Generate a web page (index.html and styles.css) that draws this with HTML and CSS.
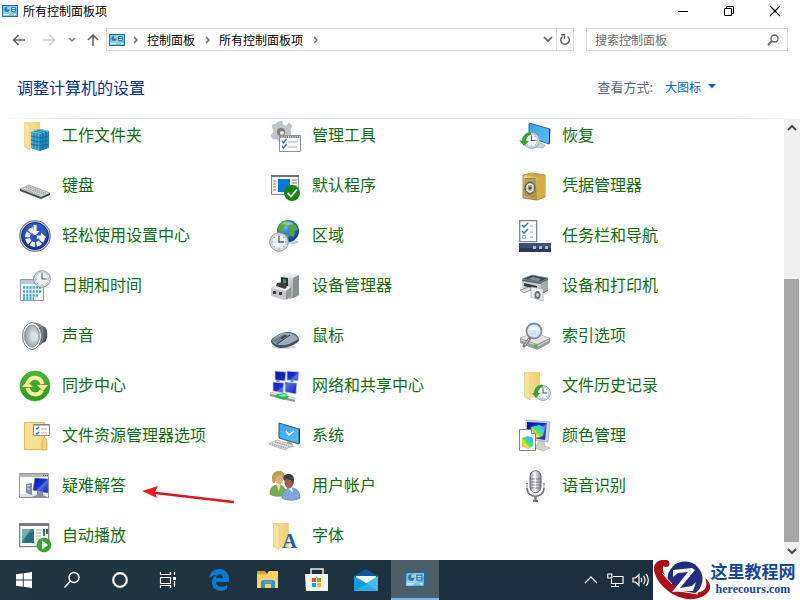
FILE: index.html
```html
<!DOCTYPE html>
<html lang="zh-CN">
<head>
<meta charset="utf-8">
<meta name="viewport" content="width=device-width, initial-scale=1">
<title>所有控制面板项</title>
<link rel="stylesheet" href="styles.css">
</head>
<body>
<svg class="defs" aria-hidden="true">
  <defs>
    <linearGradient id="folder" x1="0" y1="0" x2="1" y2="0"><stop offset="0" stop-color="#fbe6a0"/><stop offset="1" stop-color="#f0cd70"/></linearGradient>
    <linearGradient id="steel" x1="0" y1="0" x2="1" y2="1"><stop offset="0" stop-color="#f4f5f6"/><stop offset="1" stop-color="#8d9196"/></linearGradient>
    <linearGradient id="dark" x1="0" y1="0" x2="1" y2="1"><stop offset="0" stop-color="#8f979d"/><stop offset="1" stop-color="#343a40"/></linearGradient>
    <linearGradient id="screen" x1="0" y1="0" x2="1" y2="1"><stop offset="0" stop-color="#0611a8"/><stop offset=".5" stop-color="#1c33d0"/><stop offset=".55" stop-color="#4e72ea"/><stop offset="1" stop-color="#0a1b9c"/></linearGradient>
    <linearGradient id="sky" x1="0" y1="0" x2="1" y2="1"><stop offset="0" stop-color="#37a1ec"/><stop offset="1" stop-color="#5cc0fb"/></linearGradient>
    <linearGradient id="gold" x1="0" y1="0" x2="1" y2="1"><stop offset="0" stop-color="#eddb8c"/><stop offset="1" stop-color="#a9852f"/></linearGradient>
    <linearGradient id="green" x1="0" y1="0" x2="0" y2="1"><stop offset="0" stop-color="#4db53c"/><stop offset="1" stop-color="#2b9b22"/></linearGradient>
    <linearGradient id="rainbow" x1="0" y1="1" x2="1" y2="0"><stop offset="0" stop-color="#ff4b3c"/><stop offset=".3" stop-color="#ffe629"/><stop offset=".5" stop-color="#4ee457"/><stop offset=".7" stop-color="#22d5ef"/><stop offset="1" stop-color="#e63be0"/></linearGradient>
    <radialGradient id="ball" cx=".4" cy=".3" r=".8"><stop offset="0" stop-color="#6fb6f5"/><stop offset=".5" stop-color="#2567c6"/><stop offset="1" stop-color="#0b2c7e"/></radialGradient>
    <radialGradient id="ease" cx=".5" cy=".3" r=".7"><stop offset="0" stop-color="#4a72d8"/><stop offset="1" stop-color="#162f93"/></radialGradient>
    <radialGradient id="cone" cx=".6" cy=".5" r=".6"><stop offset="0" stop-color="#f4f6f7"/><stop offset="1" stop-color="#8b989f"/></radialGradient>
    <linearGradient id="mic" x1="0" y1="0" x2="1" y2="0"><stop offset="0" stop-color="#8b8f9b"/><stop offset=".4" stop-color="#fafafc"/><stop offset="1" stop-color="#83889a"/></linearGradient>
    <symbol id="panel" viewBox="0 0 16 12">
      <rect x=".5" y=".5" width="15" height="11" fill="#6cc5f2" stroke="#1a6da8"/>
      <path d="M1 8 8 1h7v2L6 11H1z" fill="#8ed6fa"/>
      <circle cx="5" cy="4.500" r="2.500" fill="#2c76b8"/><path d="M5 4.500V2a2.500 2.500 0 0 1 2.500 2.500z" fill="#f5c83b"/>
      <path d="M9.500 2.500h4v4h-4zM10 4.500h3" fill="#c7ecff" stroke="#2879b5"/>
      <path d="M2 9.500h5" stroke="#e8f8ff"/><path d="M9 9.500h2" stroke="#f3c94d"/><path d="M12 9.500h2" stroke="#fff"/>
    </symbol>
    <symbol id="clock" viewBox="0 0 20 20">
      <circle cx="10" cy="10" r="9.300" fill="#d8dde1" stroke="#8e989f"/>
      <circle cx="10" cy="10" r="7.300" fill="#f2f6f8" stroke="#b5bdc3" stroke-width=".7"/>
      <path d="M10 4v6h5" fill="none" stroke="#4b5b68" stroke-width="1.300"/>
      <path d="M10 3v1.500M10 15.500V17M3 10h1.500M15.500 10H17M5 5l1 1M15 5l-1 1M5 15l1-1M15 15l-1-1" stroke="#7e8990" stroke-width=".8"/>
    </symbol>
    <symbol id="folder-shape" viewBox="0 0 18 28">
      <path d="M0 0h16v26L0 25z" fill="url(#folder)"/><path d="M0 0 6 3v25l-6-4z" fill="#f9e2a0" stroke="#e6c36c" stroke-width=".6"/>
    </symbol>
  </defs>
</svg>

<header class="titlebar">
  <svg class="panel-icon" aria-hidden="true"><use href="#panel"/></svg>
  <span class="title">所有控制面板项</span>
  <div class="window-buttons">
    <button aria-label="最小化"><svg width="12" height="12"><path d="M1 6.500h10" stroke="#000"/></svg></button>
    <button aria-label="还原"><svg width="12" height="12" fill="none" stroke="#000"><path d="M1.500 3.500h7v7h-7zM3.500 3V1.500h7v7H9"/></svg></button>
    <button aria-label="关闭"><svg width="12" height="12"><path d="m1 1 10 10M11 1 1 11" stroke="#000" stroke-width="1.100"/></svg></button>
  </div>
</header>

<nav class="navbar" aria-label="导航">
  <div class="history">
    <button class="wide" aria-label="后退"><svg width="14" height="12" fill="none" stroke="#666" stroke-width="1.600"><path d="M13 6H2M6.500 1 1.500 6l5 5"/></svg></button>
    <button class="wide" aria-label="前进"><svg width="14" height="12" fill="none" stroke="#d0d0d0" stroke-width="1.500"><path d="M1 6h11M7.500 1l5 5-5 5"/></svg></button>
    <button class="narrow" aria-label="最近位置"><svg width="8" height="6" fill="none" stroke="#888" stroke-width="1.500"><path d="m1 1 3 3 3-3"/></svg></button>
    <button aria-label="上移"><svg width="12" height="14" fill="none" stroke="#666" stroke-width="1.600"><path d="M6 13V2M1 7l5-5 5 5"/></svg></button>
  </div>
  <div class="address">
    <svg class="panel-icon" aria-hidden="true"><use href="#panel"/></svg>
    <svg class="crumb-arrow" viewBox="0 0 6 8"><path d="m1 1 3 3-3 3"/></svg>
    <a href="#">控制面板</a>
    <svg class="crumb-arrow" viewBox="0 0 6 8"><path d="m1 1 3 3-3 3"/></svg>
    <a href="#">所有控制面板项</a>
    <svg class="crumb-arrow" viewBox="0 0 6 8"><path d="m1 1 3 3-3 3"/></svg>
    <div class="address-buttons">
      <button aria-label="历史地址"><svg width="10" height="7" fill="none" stroke="#666" stroke-width="1.700"><path d="m1 1 4 4 4-4"/></svg></button>
      <button aria-label="刷新"><svg width="12" height="13" fill="none" stroke="#666" stroke-width="1.500"><path d="M3.500 3.500a4.300 4.300 0 1 0 5 0M2 1.800h3.500v4"/></svg></button>
    </div>
  </div>
  <label class="search">
    <input type="text" placeholder="搜索控制面板" aria-label="搜索控制面板">
    <svg width="12" height="12" fill="none" stroke="#666" stroke-width="1.400"><circle cx="7.500" cy="4.500" r="3.500"/><path d="M5 7 1 11" stroke-width="2"/></svg>
  </label>
</nav>

<section class="heading">
  <h1>调整计算机的设置</h1>
  <div class="view">
    <label for="view">查看方式:</label>
    <select id="view"><option>大图标</option></select>
    <svg width="8" height="5" aria-hidden="true"><path d="M0 0h8L4 4.500z" fill="#1565b8"/></svg>
  </div>
</section>

<div class="body">
<main class="items">
  <a href="#"><svg class="icon" viewBox="0 0 32 32"><use href="#folder-shape" x="5" y="2" width="18" height="28"/><path d="m12 12 10-3 8 2v17l-9 3-9-3z" fill="#258fc2"/><path d="m12 12 9 2v17l-9-3z" fill="#43b0dd"/><path d="m12 12 10-3 8 2-9 3z" fill="#72cbea"/><path d="m12 16 9 2 9-2M12 20l9 2 9-2M12 24l9 2 9-2M15 13v16M18 13v17M24 13v17M27 12v17M21 14v17M15 11l9 2M18 10l9 2" fill="none" stroke="#12668f" stroke-width=".8"/></svg>工作文件夹</a>
  <a href="#"><svg class="icon" viewBox="0 0 32 32"><g fill="#bfc5c9" stroke="#aab0b4" stroke-width=".5"><path d="m9 2 4-1 1 4 3 1 3-3 3 3-2 4 1 3v4l-5 1-2 4-4 1-3-4-4 0-2-4 3-3-1-3 -1-4 4-1z"/></g><circle cx="12" cy="12" r="4" fill="#777d81"/><circle cx="13" cy="13" r="2" fill="#e8eaeb"/><path d="M10.500 15.500h21v16h-21z" fill="#f8f9fa" stroke="#8d9296"/><path d="M11 17h20" stroke="#777d82" stroke-width="2" stroke-dasharray="1.500 .7"/><path d="m13 21 1.500 2 3-4M13 26l1.500 2 3-4" fill="none" stroke="#2f7fc1" stroke-width="1.300"/><path d="M19 22h9M19 27h9" stroke="#a9aeb2"/></svg>管理工具</a>
  <a href="#"><svg class="icon" viewBox="0 0 32 32"><path d="m10 3 21 6-1 15-20-7z" fill="url(#sky)" stroke="#286ca2"/><path d="M30 9v15l1-1V9z" fill="#1d3850"/><path d="m17 22 9 3-2 3-8-1z" fill="#d0d5d9" stroke="#9ba3a9" stroke-width=".6"/><use href="#clock" x="4" y="12" width="17" height="17"/><path d="M3 21c0-5 4-9 9-9v3c-3 0-5 3-5 6h3l-5 5-5-6z" fill="#35a42c"/></svg>恢复</a>

  <a href="#"><svg class="icon" viewBox="0 0 32 32"><path d="m1 19 9-4 21 8-9 5z" fill="#d5d8db" stroke="#8d9194" stroke-width=".7"/><path d="m1 19 21 8 9-4v2l-9 4-21-8z" fill="#454a4d"/><path d="m4 19 18 6.500M7 17.500l18 7M9 16.500l18 7" stroke="#9ba1a6" stroke-width="1.200" stroke-dasharray="1.600 .7"/></svg>键盘</a>
  <a href="#"><svg class="icon" viewBox="0 0 32 32"><path d="M2.500 5.500h27v19h-27z" fill="#f6f6f6" stroke="#85898d"/><path d="M2 6h28" stroke="#70757a" stroke-width="2"/><path d="M9 9h12v13H9z" fill="#0878d7"/><path d="M4 11h3M4 14h3M4 17h3M4 20h3M23 10h5M23 13h5M23 16h5" stroke="#7e8489"/><circle cx="23" cy="23" r="8" fill="#10860f"/><path d="m18.500 23 3.500 3.500 6-7" fill="none" stroke="#fff" stroke-width="1.800"/></svg>默认程序</a>
  <a href="#"><svg class="icon" viewBox="0 0 32 32"><path d="m4 5 9-2 13 2v22l-8 3-14-2z" fill="url(#gold)" stroke="#94732a" stroke-width=".8"/><path d="m18 7 8-2v22l-8 3z" fill="#d7ac45"/><path d="m4 5 9-2 13 2-8 2z" fill="#c7a550"/><path d="M6 8.500h10v18L6 25z" fill="#bfa258" stroke="#8d723c" stroke-width=".7"/><ellipse cx="11" cy="18" rx="5" ry="6" fill="#888679" stroke="#514f48"/><ellipse cx="11" cy="18" rx="3" ry="3.800" fill="none" stroke="#f1f1ec" stroke-width="1.300"/><path d="M11 13v10M7 16l8 5M15 15l-8 6" stroke="#e4e4dd" stroke-width=".8"/><circle cx="11" cy="18" r="1.500" fill="#47443c"/></svg>凭据管理器</a>

  <a href="#"><svg class="icon" viewBox="0 0 32 32"><circle cx="16" cy="16" r="15.500" fill="#c0c6d2" stroke="#6f7887"/><circle cx="16" cy="16" r="13.500" fill="url(#ease)" stroke="#16266d"/><circle cx="16" cy="17" r="7.500" fill="none" stroke="#e8efff" stroke-width="5" stroke-dasharray="4.500 1.300"/><path d="M16 16V5l11 4v9z" fill="#2f55bf"/><path d="M14.500 5h3v6h3L16 16l-4.500-5h3z" fill="#fff"/><path d="M17 15.500h5v-3l5 4.500-5 4.500v-3h-5z" fill="#fff"/><circle cx="16" cy="17" r="2" fill="#2849b0"/></svg>轻松使用设置中心</a>
  <a href="#"><svg class="icon" viewBox="0 0 32 32"><ellipse cx="21" cy="22" rx="9" ry="2" fill="#c6cdd4"/><circle cx="19" cy="11" r="11" fill="url(#ball)"/><path d="M10 5c3-4 7-5 10-4l-2 4-3 1-1 5-4 1c-2-2-1-5 0-7zM22 3l5 2 2 5-3 1-1 6-5-2 1-5-3-2zM15 14l5 1-1 5-4-1z" fill="#50ab38"/><path d="M12 4c4-3 9-3 13 0-3 1-9 1-13 0z" fill="#d4f2ff" opacity=".5"/><use href="#clock" x="0" y="12" width="20" height="20"/></svg>区域</a>
  <a href="#"><svg class="icon" viewBox="0 0 32 32"><path d="M.7.700h17v21H.7z" fill="#fbfcfd" stroke="#81868c" stroke-width="1.300"/><path d="m3 5 2 2 4-4M3 11l2 2 4-4" fill="none" stroke="#2c84bd" stroke-width="1.600"/><path d="M3.500 15.500h3v3h-3z" fill="none" stroke="#6fb5dc"/><path d="M11 6h3M11 12h3M11 17h3" stroke="#a6abb0"/><path d="M0 23h32v9H0z" fill="#3e506f"/><path d="M0 28h32v4H0z" fill="#283957"/><path d="M14 26h3v3h-3zM20 26h3v3h-3zM26 26h3v3h-3z" fill="#a9b9cc"/></svg>任务栏和导航</a>

  <a href="#"><svg class="icon" viewBox="0 0 32 32"><path d="M1.500 9.500h23v21h-23z" fill="#f3f8fb" stroke="#8fa1ad"/><path d="M2 10h22v4H2z" fill="#b1cbdc"/><path d="M4 17.500h19M4 21.500h19M4 25.500h16M4 28.500h11" stroke="#38a8cb" stroke-width="2.500" stroke-dasharray="2.200 1"/><use href="#clock" x="14" y="0" width="18" height="18"/></svg>日期和时间</a>
  <a href="#"><svg class="icon" viewBox="0 0 32 32"><path d="m11 5 7-2 12 2v20l-9 4-10-8z" fill="url(#steel)"/><path d="m11 5 7-2 12 2-6 3z" fill="#e8eaeb"/><path d="m24 8 6-3v20l-6 3z" fill="#8d9092"/><path d="m12 7 7 1v10l-7-2z" fill="#26362d"/><path d="m14 9 3 .5v4l-3-.5z" fill="#588566"/><path d="m2 18 6-4 14 3v10l-7 3-13-4z" fill="#c5c8cb"/><path d="m2 18 6-4 14 3-5 4z" fill="#eceeef"/><path d="m7 16 1-3 6-1 4 5-2 2z" fill="#3b4144"/><path d="m17 21 5-4v10l-5 3z" fill="#93989a"/><path d="M4 21h3v3H4zM10 22h3v3h-3z" fill="#394047"/></svg>设备管理器</a>
  <a href="#"><svg class="icon" viewBox="0 0 32 32"><path d="m3 10 10-4 16 3v12l-7 3-19-6z" fill="#596067"/><path d="m3 9 10-4 16 3-7 4z" fill="#3f474d" stroke="#879197" stroke-width=".8"/><path d="m9 9 5-2 8 2-3 2z" fill="#7d9994"/><path d="m3 11 19 3v8L3 18z" fill="#c8cbcd"/><path d="m5 13 13 3v3L5 16z" fill="#33393d"/><path d="m1 20 9-3 3 2-8 4z" fill="#dfe1e2" stroke="#74797c" stroke-width=".7"/><path d="m22 13 7-3v10l-7 3z" fill="#a5aaad"/><path d="m12 17 12 2v12l-12-4z" fill="#e8eaeb" stroke="#a3a7aa" stroke-width=".7"/><ellipse cx="18.500" cy="25" rx="3" ry="4" fill="#676d71"/><ellipse cx="18.500" cy="25" rx="1.300" ry="2" fill="#d5d8db"/></svg>设备和打印机</a>

  <a href="#"><svg class="icon" viewBox="0 0 32 32"><path d="M15 3c5-1 7 3 11 4 3 1 3 13 0 15-4 1-7 6-11 6z" fill="url(#dark)"/><path d="M21 5c4 5 4 15 0 20" fill="none" stroke="#8c9295"/><ellipse cx="13" cy="16" rx="9.500" ry="13.500" fill="#f0f1f2" stroke="#777c7f"/><ellipse cx="13" cy="16" rx="7.500" ry="11" fill="url(#cone)" stroke="#929b9f"/><ellipse cx="16" cy="17" rx="3" ry="4" fill="#d7e0e5"/></svg>声音</a>
  <a href="#"><svg class="icon" viewBox="0 0 32 32"><ellipse cx="15" cy="27" rx="12" ry="2" fill="#d5d8da"/><path d="M2 21c0-3 10-9 17-9 6 0 11 4 11 8 0 3-12 9-19 8-5-1-9-4-9-7z" fill="#455460"/><path d="M3 20c4-4 11-8 16-7 5 0 9 3 10 6-4 3-11 7-17 6-5 0-8-2-9-5z" fill="#a0adb9"/><path d="m3 20 12-6 5 1-12 9z" fill="#738391"/><path d="M8 24 21 15" stroke="#273a4b"/><path d="m11 18 5-3 2 1-5 3z" fill="#374451"/></svg>鼠标</a>
  <a href="#"><svg class="icon" viewBox="0 0 32 32"><path d="m1 18 14-5 16 5-13 7z" fill="#e2e4e5" stroke="#9aa0a4" stroke-width=".6"/><path d="m1 18 17 6v6L1 23zM18 24l13-6v5l-13 7z" fill="#999ea1"/><path d="m2 20 15 5M19 26l11-6" stroke="#dadddd"/><path d="m15 24 3 1v3l-3-1z" fill="#5ba43f"/><circle cx="15" cy="11" r="7.500" fill="#cae5fa" fill-opacity=".85" stroke="#858c94" stroke-width="1.800"/><path d="M10 10c2-4 7-4 9-1-3 1-6 1-9 1z" fill="#f7fcff"/><path d="m11 18-6 8" stroke="#797f85" stroke-width="3" stroke-linecap="round"/><path d="m10 19-4 6" stroke="#d2d5d9"/></svg>索引选项</a>

  <a href="#"><svg class="icon" viewBox="0 0 32 32"><circle cx="16" cy="16" r="15" fill="url(#green)" stroke="#379c2e" stroke-width=".6"/><path d="M9 12.500C12 6 21 6 23.500 14M23 20.500C20 26 11 26 8.500 18" fill="none" stroke="#fff0a0" stroke-width="4"/><path d="M18 15h11l-5 6zM3 17h11l-6-6z" fill="#ffeb91"/></svg>同步中心</a>
  <a href="#"><svg class="icon" viewBox="0 0 32 32"><g fill="url(#screen)" stroke="#bfc8dc" stroke-width=".8"><path d="m6 1 11 1-1 9-10-1zM18 1l12 1-1 9-11-1zM4 12l11 1-1 10-10-2zM16 12l12 1-1 11-11-2z"/></g><path d="M9 10v2M23 10v2" stroke="#878c91" stroke-width="3"/><path d="m1 24 25 6" stroke="#929698" stroke-width="4"/><path d="m1 23 25 6" stroke="#e4e5e4" stroke-width="1.500"/><path d="m8 24 8-1 4 4-5 3-9-3z" fill="#24b856"/><path d="m9 25 7-1 2 2-5 1z" fill="#7ced98"/></svg>网络和共享中心</a>
  <a href="#"><svg class="icon" viewBox="0 0 32 32"><use href="#folder-shape" x="5" y="2" width="18" height="28"/><use href="#clock" x="16" y="15" width="16" height="16"/><path d="M15 23c0-5 4-9 9-8v2c-3 0-5 3-5 6h2l-4 5-4-5z" fill="#35a635"/></svg>文件历史记录</a>

  <a href="#"><svg class="icon" viewBox="0 0 32 32"><path d="M5.500 2.500h20v27h-20z" fill="#f9df93" stroke="#e1bc61"/><path d="M24 19c2-3 4 0 4 4v7h-5v-7z" fill="#f5d37b" stroke="#d9ae4b" stroke-width=".8"/><path d="M14.500 4.500h16v11h-16z" fill="#fcfcfc" stroke="#8b8f94"/><path d="M15 5h15" stroke="#73787d"/><path d="m17 8 1 1 2-2M17 13l1 1 2-2" fill="none" stroke="#297bbb" stroke-width="1.300"/><path d="M22 9h6M22 13h6" stroke="#aab2bb"/></svg>文件资源管理器选项</a>
  <a href="#"><svg class="icon" viewBox="0 0 32 32"><path d="m10 3 20 6v15l-20-6z" fill="url(#sky)" stroke="#36566c"/><path d="m30 9 1-1v15l-1 1z" fill="#293e4d"/><path d="m17 11 3 4 5-4" fill="none" stroke="#fff" stroke-width="1.400"/><path d="m19 21 4 2-1 3h4l-8 2-2-3z" fill="#8e979d"/><path d="m0 24 8-4 16 5-8 5z" fill="#e1e4e7" stroke="#9ba1a6" stroke-width=".7"/><path d="m3 24 14 4M6 22l14 4" stroke="#8e959a" stroke-width="1.200" stroke-dasharray="1.500 .7"/></svg>系统</a>
  <a href="#"><svg class="icon" viewBox="0 0 32 32"><path d="m7 0 24 2-2 20-22-3z" fill="#cfd3d8" stroke="#a1a6ab" stroke-width=".7"/><path d="m8 2 20 1-2 17-18-3z" fill="url(#screen)"/><path d="m20 21 5 1 1 4 5 2-7 3-8-3z" fill="#d4d4cb" stroke="#a4a49a" stroke-width=".6"/><path d="m12 7 8-2 6 2-2 9-7 2-4-3z" fill="url(#rainbow)"/><path d="M.5 9.500h12l4 4v17H.5z" fill="#fff" stroke="#7e848b"/><path d="M12.500 9.500v4h4" fill="#d5d9dc" stroke="#7e848b"/><path d="m3 18 6-2 5 2v8l-5 3-6-3z" fill="url(#rainbow)"/></svg>颜色管理</a>

  <div class="marked">
    <a href="#"><svg class="icon" viewBox="0 0 32 32"><path d="M.5 3.500h29v24H.5z" fill="#fbfbfb" stroke="#92979d"/><path d="M0 4h30v3H0z" fill="#b2b7bd"/><path d="M24 5.500h5" stroke="#555d65" stroke-dasharray="1 1"/><path d="M1 24h28v3H1z" fill="#dfe3e9"/><path d="m7 14 6-1v12l-6-2z" fill="#858e9c"/><path d="m8 16 3-.5M8 19h3" stroke="#dce4ed"/><path d="m16 8 13 1v14l-15-3z" fill="url(#screen)" stroke="#6c79a0" stroke-width=".7"/><path d="m18 21 6 1v3l4 2H12l6-2z" fill="#88919f"/></svg>疑难解答</a>
    <svg class="pointer" viewBox="0 0 92 18" aria-hidden="true"><path d="m14 7 77 9" stroke="#d71920" stroke-width="2.500" stroke-linecap="round"/><path d="M0 5 16 0l-3 6 2 6z" fill="#ed1c24"/></svg>
  </div>
  <a href="#"><svg class="icon" viewBox="0 0 32 32"><path d="M1 24c0-6 3-9 8-9s8 3 8 9c-4 3-12 3-16 0z" fill="#79af4b" stroke="#59883a" stroke-width=".7"/><path d="m7 14 5-1-2 8z" fill="#f5deba"/><ellipse cx="10" cy="8" rx="4.500" ry="6" fill="#dfae80"/><path d="M4 13C1 5 5 1 9 1c4-1 8 3 6 9l-3-5-5 2-1 6z" fill="#b8a354"/><path d="M13 28c0-6 3-10 9-10s9 4 9 10c-4 3-14 3-18 0z" fill="#7fa8da" stroke="#5d7fb0" stroke-width=".7"/><path d="m18 17 5 1 1 5z" fill="#e7f4ff"/><ellipse cx="20" cy="12" rx="4.500" ry="6.500" fill="#9b6343"/><path d="M15 11c-2-6 2-7 5-7 5 0 6 5 4 11l-2-5-5-1z" fill="#37414a"/></svg>用户帐户</a>
  <a href="#"><svg class="icon" viewBox="0 0 32 32"><path d="M8 13v5c0 11 17 11 17 0v-5" fill="none" stroke="#6f7586" stroke-width="1.600"/><path d="M8 14v4M25 14v4" stroke="#c8cdd7" stroke-width="2"/><rect x="11" y=".7" width="11" height="22" rx="5.500" fill="url(#mic)" stroke="#646979"/><path d="M11 9h11M11 12h11M11 15h11M11 18h11" stroke="#686e7e" stroke-width=".8"/><path d="M16.500 2v20" stroke="#fff" opacity=".7"/><path d="M16.500 26v4M14 31h5" stroke="#6f7584" stroke-width="2"/></svg>语音识别</a>

  <a href="#"><svg class="icon" viewBox="0 0 32 32"><path d="M.7 3.700h29v23H.7z" fill="#fafbfc" stroke="#7d8388" stroke-width="1.300"/><path d="M0 4h30v2H0z" fill="#777d82"/><path d="M3 9h12v14H3z" fill="#3f877f"/><path d="m3 9 9 0-9 12z" fill="#76b0b8"/><path d="M5 23C6 16 11 12 15 11v12z" fill="#286e87"/><path d="M17 10h5M17 13h5M17 16h5M17 19h4" stroke="#a5abb0"/><path d="M25 9v7M28 9v5" stroke="#35705b" stroke-width="2"/><circle cx="25" cy="25" r="7" fill="#37a72b" stroke="#24831f" stroke-width=".6"/><path d="m23 20.500 6 4.500-6 4.500z" fill="#fff"/></svg>自动播放</a>
  <a href="#"><svg class="icon" viewBox="0 0 32 32"><use href="#folder-shape" x="4" y="3" width="18" height="27"/><text class="font-letter" x="13" y="28" aria-hidden="true">A</text></svg>字体</a>
</main>
<div class="scrollbar" aria-hidden="true">
  <svg width="16" height="18" fill="none" stroke="#4c4c4c" stroke-width="2"><path d="m4 11 4-4 4 4"/></svg>
  <div class="track"><div class="thumb"></div></div>
  <svg width="16" height="18" fill="none" stroke="#4c4c4c" stroke-width="2"><path d="m4 7 4 4 4-4"/></svg>
</div>
</div>

<footer class="taskbar">
  <button aria-label="开始"><svg width="18" height="18" fill="#fff"><path d="m1 3.300 6.800-1V8.500H1zM8.700 2.200 17 1v7.500H8.700zM1 9.400h6.800v6.300L1 14.700zM8.700 9.400H17V17l-8.300-1.200z"/></svg></button>
  <button aria-label="搜索"><svg width="18" height="18" fill="none" stroke="#fff" stroke-width="1.400"><circle cx="11" cy="6.500" r="5"/><path d="m7.500 10-6 6.500"/></svg></button>
  <button aria-label="Cortana"><svg width="18" height="18" fill="none" stroke="#fff" stroke-width="2.200"><circle cx="9" cy="9" r="6.800"/></svg></button>
  <button aria-label="任务视图"><svg width="18" height="18" fill="none" stroke="#fff" stroke-width="1.200"><path d="M1.500 1v2.500h10V1M1.500 6.500h10v6h-10zM1.500 17v-2.500h10V17M15.500 1v3M15.500 10v6"/><path d="M14 6h3v3h-3z" fill="#fff" stroke="none"/></svg></button>
  <div class="apps">
    <button aria-label="Edge"><svg width="22" height="22" viewBox="0 0 22 22"><path d="M1 10C2 3 6 0 11 0c7 0 10 5 10 10v3H8c0 5 7 6 11 3v4c-6 4-15 1-15-6 0-4 2-7 5-8-4 0-7 2-8 4zM8 9h7c0-5-6-5-7 0z" fill="#0b79d2"/></svg></button>
    <button aria-label="文件资源管理器"><svg width="22" height="20" viewBox="0 0 22 20"><path d="M0 1h8l2 3H0z" fill="#d99e16"/><path d="M0 4h10l2-3h9v17H0z" fill="#fcd268"/><path d="M0 4h10" stroke="#e9af31"/><path d="M4 18V11l2-1h10l2 1v7h-4v-4H8v4z" fill="#3d91cb"/><path d="M7 12h8" stroke="#68b3df"/></svg></button>
    <button aria-label="应用商店"><svg width="24" height="24" viewBox="0 0 24 24"><path d="M6 7V1h12v6" fill="none" stroke="#e9ecee" stroke-width="1.500"/><path d="M0 6h23v17H1z" fill="#f4f4f4"/><path d="M7 10h4v4H7z" fill="#e94c25"/><path d="M12 10h4v4h-4z" fill="#7bb51b"/><path d="M7 15h4v4H7z" fill="#12a4e5"/><path d="M12 15h4v4h-4z" fill="#fab91c"/></svg></button>
    <button aria-label="邮件"><svg width="24" height="24" viewBox="0 0 24 24"><path d="M0 8 12 1l12 7v8H0z" fill="#075999"/><path d="M2 8h20v9H2z" fill="#f4f8fa"/><path d="M24 8v15H0z" fill="#40bef3"/><path d="m0 8 14 8-14 7z" fill="#159bdb"/><path d="m0 23 14-7 10 7z" fill="#2aaeee"/></svg></button>
    <button class="active" aria-label="控制面板"><svg width="20" height="15"><use href="#panel"/></svg></button>
  </div>
  <div class="tray">
    <button aria-label="显示隐藏的图标"><svg width="14" height="10" fill="none" stroke="#fff" stroke-width="1.400"><path d="m1 8 6-6 6 6"/></svg></button>
    <button aria-label="网络"><svg width="17" height="15" fill="none" stroke="#fff" stroke-width="1.200"><path d="M6 3.500h10v7H4.500V6M4 13.500h8M8.500 10.500v3M.8 1h4v4h-4z"/></svg></button>
    <button aria-label="音量"><svg width="18" height="14" fill="none" stroke="#fff" stroke-width="1.200"><path d="M1 5h2.500L7 1.500v11L3.500 9H1zM9 5c1 1 1 3 0 4M11.500 3c2 2 2 6 0 8M14 1c3 3 3 9 0 12"/></svg></button>
  </div>
  <div class="brand">
    <svg width="57" height="40" viewBox="0 0 57 40" aria-hidden="true"><circle cx="32" cy="19" r="17.500" fill="#252b7e"/><path d="M15 1C6-3-2 4 2 14c4 12 18 23 32 25 11 1 20-3 23-10 1-4-1-8-5-11 3 7 1 12-5 14C33 37 9 20 10 8c0-3 2-5 5-5z" fill="#aa1218"/><circle cx="13" cy="3.500" r="3.500" fill="#aa1218"/><path d="m9 13 10 11M26 31l19 3" stroke="#fff"/><path d="M20 10 39 8l3 2-15 18 12-2 4-4-3 9-21 1 16-20-10 1-5 4z" fill="#fff"/></svg>
    <div class="brand-text"><strong>这里教程网</strong><span>herecours.com</span></div>
  </div>
</footer>
</body>
</html>
```

FILE: styles.css
```css
* { box-sizing: border-box; }

body {
  margin: 0;
  min-height: 100vh;
  display: flex;
  flex-direction: column;
  background: #fff;
  color: #000;
  font: 12px/16px "Noto Sans CJK SC", "Noto Sans", sans-serif;
}

.defs { position: absolute; width: 0; height: 0; }

a { color: inherit; text-decoration: none; }
svg { flex: none; }

button {
  display: flex;
  align-items: center;
  justify-content: center;
  padding: 0;
  border: 0;
  background: none;
}

.panel-icon { width: 16px; height: 12px; }

.titlebar {
  display: flex;
  align-items: center;
  gap: 5px;
  height: 22px;
  padding: 0 2px;
}

.window-buttons { display: flex; margin-left: auto; }
.window-buttons button { width: 46px; height: 22px; }

.navbar {
  display: flex;
  margin-top: 6px;
  padding-right: 12px;
}

.history { display: flex; padding-left: 4px; }
.history button { width: 26px; }
.history .wide { width: 30px; }
.history .narrow { width: 16px; }

.address {
  display: flex;
  flex: 1;
  align-items: center;
  gap: 8px;
  height: 23px;
  padding-left: 2px;
  border: 1px solid #d9d9d9;
}

.address a { margin-right: 2px; }

.crumb-arrow {
  width: 6px;
  height: 8px;
  fill: none;
  stroke: #777;
  stroke-width: 1.5;
}

.address-buttons { display: flex; align-self: stretch; margin-left: auto; }
.address-buttons button { width: 17px; }
.address-buttons button + button { border-left: 1px solid #d9d9d9; }

.search {
  display: flex;
  align-items: center;
  width: 202px;
  height: 23px;
  margin-left: 12px;
  padding: 0 8px;
  border: 1px solid #d9d9d9;
}

.search input {
  flex: 1;
  min-width: 0;
  padding: 0;
  border: 0;
  outline: 0;
  background: none;
  font: inherit;
}

.search input::placeholder { color: #6d6d6d; opacity: 1; }

.heading {
  display: flex;
  align-items: center;
  justify-content: space-between;
  height: 68px;
  padding: 4px 84px 0 17px;
  border-bottom: 1px solid;
  border-image: linear-gradient(to right, #fff, #d3e3f0 10%, #d3e3f0 92%, #fff) 1;
}

h1 {
  margin: 0;
  color: #039;
  font-size: 16px;
  line-height: 24px;
  font-weight: 400;
}

.view { display: flex; align-items: center; }
.view label { margin-right: 12px; color: #596b80; font-size: 13px; }

.view select {
  appearance: none;
  margin-right: 6px;
  padding: 0;
  border: 0;
  background: none;
  color: #06c;
  font: inherit;
}

.body { display: flex; flex: 1; }

.items {
  display: grid;
  flex: 1;
  grid-template-columns: repeat(3, minmax(0, 1fr));
  align-content: start;
  gap: 18px 0;
  padding: 1px 15px 8px 19px;
  color: #107010;
  font-size: 16px;
  line-height: 28px;
}

.items a { display: flex; gap: 11px; }
.icon { width: 32px; height: 32px; overflow: visible; }
.font-letter { fill: #1769a5; font: bold 21px/24px "Liberation Serif", serif; }

.marked { position: relative; }
.pointer { position: absolute; top: 16px; left: 123px; width: 92px; height: 18px; }

.scrollbar {
  display: flex;
  flex-direction: column;
  width: 16px;
  background: #f0f0f0;
}

.track { display: flex; flex: 1; align-items: flex-end; }
.thumb { width: 15px; height: 65%; background: #a6a6a6; }

.taskbar {
  display: flex;
  height: 40px;
  background: linear-gradient(to right, #213640, #1b2b3e);
}

.taskbar button { width: 48px; height: 40px; }
.apps { display: flex; gap: 1px; margin-left: 3px; }
.taskbar .active { background: #4d5e69; border-bottom: 2px solid #76b9ed; }

.tray { display: flex; margin-left: auto; }
.taskbar .tray button { width: 25px; }

.brand { display: flex; background: #fff; }

.brand-text {
  display: flex;
  flex-direction: column;
  width: 90px;
  padding-right: 4px;
  color: #17479e;
  text-align: center;
}

.brand-text strong { font-size: 17px; line-height: 22px; }
.brand-text span { font: bold 12px/14px "Liberation Serif", serif; }
```
